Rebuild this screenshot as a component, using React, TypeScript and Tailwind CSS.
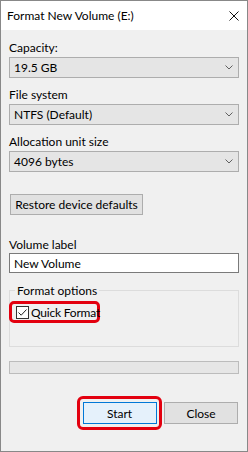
const FONT = "font-['Segoe_UI','Lato',sans-serif]";

const Chevron = () => (
  <svg width="8" height="5" viewBox="0 0 8 5" className="shrink-0">
    <path d="M0.5 0.5 L4 4 L7.5 0.5" fill="none" stroke="#606060" strokeWidth="1" />
  </svg>
);

const Combo = ({ value }: { value: string }) => (
  <div className="flex h-[21px] items-center justify-between border border-[#adadad] bg-[#e5e5e5] pl-[4px] pr-[5px]">
    <span className="leading-[15px]">{value}</span>
    <Chevron />
  </div>
);

const Label = ({ children }: { children: string }) => (
  <div className="mb-[2px] leading-[15px]">{children}</div>
);

export default function App() {
  return (
    <div className={`${FONT} flex h-[452px] w-[248px] flex-col whitespace-nowrap border border-[#888888] bg-[#f0f0f0] text-[12px] text-black`}>
      {/* title bar */}
      <div className="flex h-[29px] shrink-0 items-center justify-between bg-white pl-[6px] pr-[8px]">
        <span className="leading-[15px]">Format New Volume (E:)</span>
        <svg width="10" height="10" viewBox="0 0 10 10">
          <path d="M0.5 0.5 L9.5 9.5 M9.5 0.5 L0.5 9.5" stroke="#111" strokeWidth="1" />
        </svg>
      </div>

      <div className="flex flex-col px-[8px] pt-[10px]">
        <Label>Capacity:</Label>
        <Combo value="19.5 GB" />

        <div className="mt-[9px]">
          <Label>File system</Label>
          <Combo value="NTFS (Default)" />
        </div>

        <div className="mt-[9px]">
          <Label>Allocation unit size</Label>
          <Combo value="4096 bytes" />
        </div>

        <div className="mt-[22px] flex">
          <button className="ml-[1px] h-[21px] w-[133px] border border-[#adadad] bg-[#e1e1e1] text-center leading-[15px]">
            Restore device defaults
          </button>
        </div>

        <div className="mt-[22px]">
          <div className="mb-[1px] leading-[15px]">Volume label</div>
          <div className="flex h-[20px] items-center border border-[#7a7a7a] bg-white pl-[4px] leading-[15px]">
            New Volume
          </div>
        </div>

        <fieldset className="mt-[10px] border border-[#dcdcdc] pb-[23px]">
          <legend className="ml-[5px] px-[2px] leading-[15px]">Format options</legend>
          <div className="-ml-[1px] mt-[3px] flex h-[22px] w-[91px] items-center rounded-[5px] border-[3px] border-[#e3000f] pl-[4px]">
            <div className="flex h-[13px] w-[13px] shrink-0 items-center justify-center border border-[#333333] bg-white">
              <svg width="11" height="11" viewBox="0 0 11 11">
                <path d="M1.5 5.5 L4.2 8.2 L9.5 2.5" fill="none" stroke="#222" strokeWidth="1" />
              </svg>
            </div>
            <span className="ml-[2px] leading-[15px] tracking-[-0.2px]">Quick Format</span>
          </div>
        </fieldset>

        <div className="mt-[14px] h-[13px] border border-[#bcbcbc] bg-[#e6e6e6]" />

        <div className="mt-[22px] flex items-center justify-end pr-[1px]">
          <div className="flex h-[34px] w-[85px] items-center justify-center rounded-[6px] border-[3px] border-[#e3000f]">
            <button className="h-[22px] w-[74px] border border-[#0078d7] bg-[#e5f1fb] leading-[15px]">
              Start
            </button>
          </div>
          <button className="ml-[2px] h-[22px] w-[74px] border border-[#adadad] bg-[#e1e1e1] leading-[15px]">
            Close
          </button>
        </div>
      </div>
    </div>
  );
}
